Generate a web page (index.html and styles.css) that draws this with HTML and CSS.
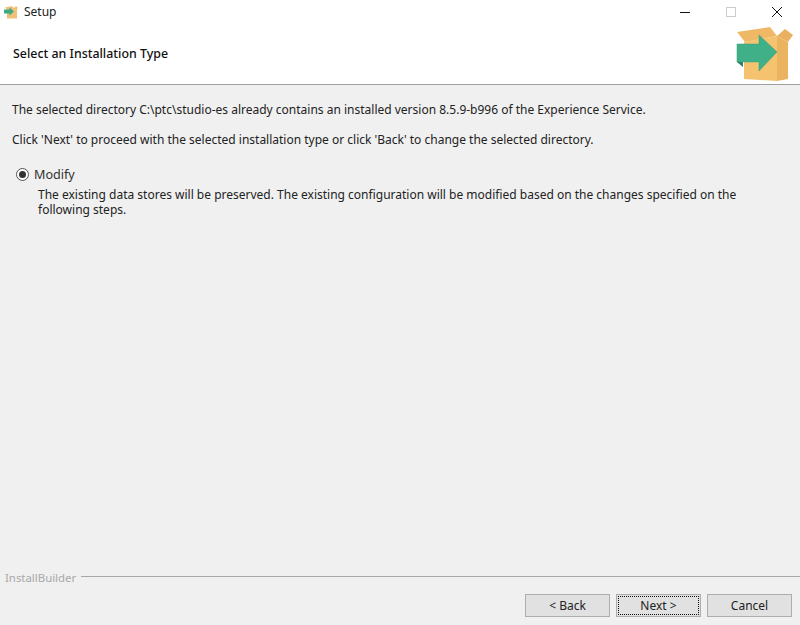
FILE: index.html
```html
<!DOCTYPE html>
<html lang="en">
<head>
<meta charset="utf-8">
<title>Setup</title>
<link rel="stylesheet" href="styles.css">
</head>
<body>
<div class="window">
  <header class="top">
    <div class="titlebar">
      <svg class="app-icon" width="14" height="14" viewBox="0 0 14 14">
        <path d="M1 2.5 L8 1 L10 3 L12 1 L14 3 L13 4 V13.5 L3 13.5 V5 Z" fill="#f0c078"/>
        <path d="M0 4.5 H5.5 V2.5 L10 6.5 L5.5 10.5 V8.5 H0 Z" fill="#3fa884"/>
      </svg>
      <span class="app-title">Setup</span>
      <div class="controls">
        <svg width="14" height="14" viewBox="0 0 14 14"><path d="M2 7.5 H12" stroke="#111" stroke-width="1"/></svg>
        <svg width="14" height="14" viewBox="0 0 14 14"><rect x="2.5" y="2.5" width="9" height="9" fill="none" stroke="#ccc"/></svg>
        <svg width="14" height="14" viewBox="0 0 14 14"><path d="M2 2 L12 12 M12 2 L2 12" stroke="#111" stroke-width="1"/></svg>
      </div>
    </div>
    <div class="banner">
      <h1 class="page-title">Select an Installation Type</h1>
      <svg class="logo" width="60" height="58" viewBox="0 0 60 58">
        <path d="M2 7 L35 2 L42 11 L10 17 Z" fill="#eeb866"/>
        <path d="M42 11 L50 4 L58 10 L53 17 Z" fill="#e8b060"/>
        <path d="M9 17 L42 11 V56 L9 54 Z" fill="#f5c36f"/>
        <path d="M42 11 L53 17 V54 L42 56 Z" fill="#e9b35f"/>
        <path d="M2 37 H8 V42 Z" fill="#2a7d62"/>
        <path d="M2 19 H24 V10 L42 27 L24 46 V37 H2 Z" fill="#3fb088" stroke="#35a07a" stroke-width="0.5"/>
      </svg>
    </div>
  </header>
  <main class="content">
    <p class="info first">The selected directory C:\ptc\studio-es already contains an installed version 8.5.9-b996 of the Experience Service.</p>
    <p class="info second">Click 'Next' to proceed with the selected installation type or click 'Back' to change the selected directory.</p>
    <label class="radio-row">
      <span class="radio"><span class="dot"></span></span>
      <span class="radio-label">Modify</span>
    </label>
    <p class="desc">The existing data stores will be preserved. The existing configuration will be modified based on the changes specified on the following steps.</p>
  </main>
  <footer class="bottom">
    <div class="brand-row">
      <span class="brand">InstallBuilder</span>
      <span class="rule"></span>
    </div>
    <div class="buttons">
      <button class="btn" type="button">&lt; Back</button>
      <button class="btn focused" type="button"><span class="focus-ring">Next &gt;</span></button>
      <button class="btn" type="button">Cancel</button>
    </div>
  </footer>
</div>
</body>
</html>
```

FILE: styles.css
```css
* { box-sizing: border-box; }
html, body { margin: 0; padding: 0; }
body {
  width: 800px;
  height: 625px;
  overflow: hidden;
  background: #f0f0f0;
  color: #1a1a1a;
  font-family: "Noto Sans", "Open Sans", sans-serif;
  font-size: 12px;
}
.window {
  display: flex;
  flex-direction: column;
  height: 625px;
}
.top {
  height: 85px;
  background: #fff;
  border-bottom: 1px solid #a0a0a0;
  flex: none;
}
.titlebar {
  display: flex;
  align-items: center;
  height: 23px;
  padding-left: 4px;
}
.app-icon { margin-right: 6px; }
.app-title { font-size: 12px; color: #222; }
.controls {
  margin-left: auto;
  display: flex;
  gap: 32px;
  padding-right: 16px;
}
.banner {
  display: flex;
  justify-content: space-between;
  align-items: flex-start;
  padding: 0 5px 0 13px;
}
.page-title {
  margin: 21px 0 0;
  font-size: 12.4px;
  font-weight: 500;
  line-height: 20px;
  color: #111;
}
.logo { margin-top: 2px; }
.content {
  flex: 1;
  padding: 0 12px;
}
.info {
  margin: 0;
  line-height: 16px;
  color: #222;
}
.first { margin-top: 17px; }
.second { margin-top: 14px; }
.radio-row {
  display: flex;
  align-items: center;
  margin-top: 18px;
  padding-left: 4px;
  height: 16px;
}
.radio {
  width: 13px;
  height: 13px;
  border: 1px solid #555;
  border-radius: 50%;
  background: #fff;
  display: flex;
  align-items: center;
  justify-content: center;
  margin-right: 5px;
}
.dot {
  width: 7px;
  height: 7px;
  border-radius: 50%;
  background: #333;
}
.radio-label { font-size: 12.6px; color: #333; }
.desc {
  margin: 5px 40px 0 26px;
  line-height: 15px;
  color: #222;
}
.bottom {
  flex: none;
  height: 56px;
}
.brand-row {
  display: flex;
  align-items: center;
  height: 14px;
  padding-left: 5px;
}
.brand { font-size: 11.4px; color: #a8a8a8; position: relative; top: 1px; }
.rule {
  flex: 1;
  height: 1px;
  background: #a8a8a8;
  margin-left: 5px;
}
.buttons {
  display: flex;
  justify-content: flex-end;
  gap: 6px;
  padding: 11px 8px 0 0;
}
.btn {
  width: 85px;
  height: 23px;
  padding: 0;
  background: #e1e1e1;
  border: 1px solid #adadad;
  font: inherit;
  color: #222;
  display: flex;
  align-items: center;
  justify-content: center;
}
.focused { padding: 1px; }
.focus-ring {
  display: flex;
  align-items: center;
  justify-content: center;
  width: 100%;
  height: 100%;
  border: 1px dotted #111;
}
```
